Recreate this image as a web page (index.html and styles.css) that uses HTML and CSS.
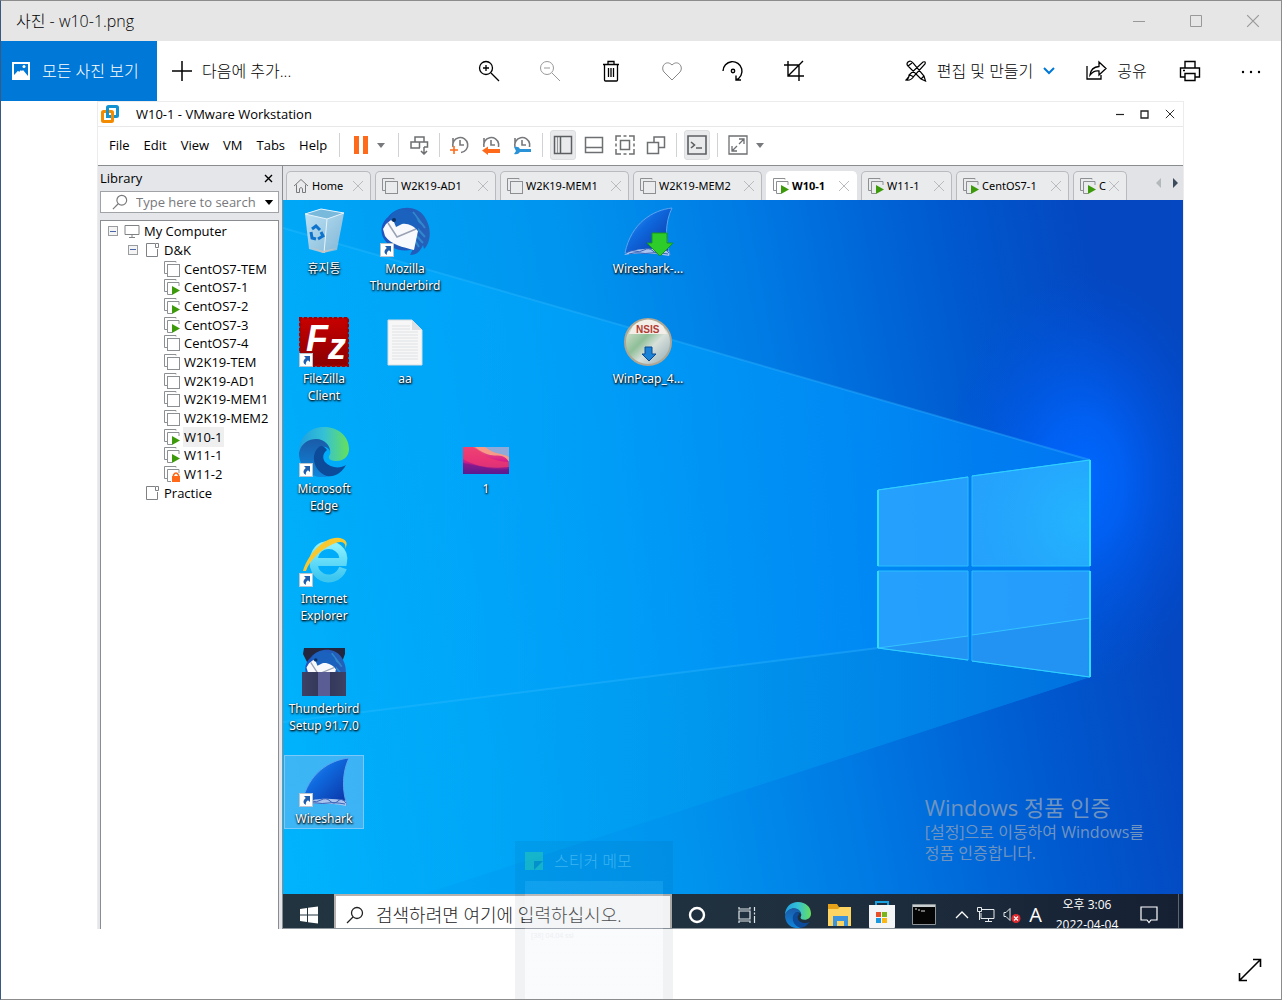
FILE: index.html
```html
<!DOCTYPE html>
<html lang="ko">
<head>
<meta charset="utf-8">
<meta name="viewport" content="width=device-width, initial-scale=1">
<title>사진 - w10-1.png</title>
<link rel="stylesheet" href="styles.css">
</head>
<body>
<svg class="defs" aria-hidden="true">
  <defs>
    <linearGradient id="gFin" x1="0" y1="0" x2="1" y2="1"><stop offset="0" stop-color="#4aa0f5"/><stop offset=".4" stop-color="#0f6adf"/><stop offset="1" stop-color="#0a2fa0"/></linearGradient>
    <linearGradient id="gEdgeTop" x1="0" y1="0" x2="1" y2="0"><stop offset="0" stop-color="#1f9fe0"/><stop offset=".5" stop-color="#35c1d5"/><stop offset="1" stop-color="#66e05a"/></linearGradient>
    <linearGradient id="gEdgeLeft" x1="0" y1="0" x2="0" y2="1"><stop offset="0" stop-color="#1a5ba8"/><stop offset="1" stop-color="#0f86dc"/></linearGradient>
    <linearGradient id="gRed" x1="0" y1="0" x2="0" y2="1"><stop offset="0" stop-color="#c80000"/><stop offset="1" stop-color="#8a0000"/></linearGradient>
    <linearGradient id="gBin" x1="0" y1="0" x2="1" y2="1"><stop offset="0" stop-color="#d4eaf6"/><stop offset="1" stop-color="#8fb8d2"/></linearGradient>
    <linearGradient id="gSwirl" x1="0" y1="0" x2="1" y2="0"><stop offset="0" stop-color="#1c55c0"/><stop offset="1" stop-color="#2560b8"/></linearGradient>
    <linearGradient id="gPic" x1="0" y1="0" x2="0" y2="1"><stop offset="0" stop-color="#f06a78"/><stop offset=".5" stop-color="#d81e88"/><stop offset="1" stop-color="#5a1a90"/></linearGradient>
    <linearGradient id="gIe" x1="0" y1="0" x2="0" y2="1"><stop offset="0" stop-color="#8af0ff"/><stop offset="1" stop-color="#3cc6f0"/></linearGradient>
    <linearGradient id="gBox" x1="0" y1="0" x2="1" y2="0"><stop offset="0" stop-color="#3d4264"/><stop offset=".36" stop-color="#34385a"/><stop offset=".37" stop-color="#5a5d94"/><stop offset=".63" stop-color="#5a5d94"/><stop offset=".64" stop-color="#34385a"/><stop offset="1" stop-color="#3d4264"/></linearGradient>
    <linearGradient id="gDisc" x1="0" y1="0" x2="1" y2="1"><stop offset="0" stop-color="#f2efe6"/><stop offset=".42" stop-color="#8fbf98"/><stop offset=".6" stop-color="#d8e0da"/><stop offset="1" stop-color="#8fa9b5"/></linearGradient>
    <symbol id="shortcut" viewBox="0 0 14 14"><rect x=".5" y=".5" width="13" height="13" fill="#fff" stroke="#b8c4d0"/><path d="M5 3h6v6L9 7.200C7 8.500 6.500 10 7 12C4 10.500 3.500 7.500 6.800 5z" fill="#1f5fae"/></symbol>
    <symbol id="edge" viewBox="0 0 50 50">
      <path d="M0 25C0 10 11 0 25 0C40 0 50 10 50 22C50 30 44 34 38 34C32 34 29 32 30 29C33 26 31 17 24 14C16 10 5 14 0 25z" fill="url(#gEdgeTop)"/>
      <path d="M0 26C2 16 10 12 17 12C26 12 31 19 31 24C29 20 24 18 20 22C12 28 17 45 31 49C14 54 0 42 0 26z" fill="url(#gEdgeLeft)"/>
      <path d="M20 20C11 27 14 44 28 49C36 51 44 44 47 38C41 42 31 41 26 35C23 31 24 26 28 23C25 19 22 18 20 20z" fill="#0c4a9a"/>
    </symbol>
    <symbol id="fin" viewBox="0 0 50 50"><path d="M49 1C30 3 8 16 2 46C18 43 32 44 47 48C42 34 42 15 49 1z" fill="url(#gFin)" stroke="#5aa4f0" stroke-width="1"/><path d="M1 48C10 41 30 40 46 44V49C30 46 15 46 1 48z" fill="#aac4ee"/><path d="M3 46q5-4 9-2t9-1t9 1t8 0t8 2M6 47q6-2 11-1t11 0t17 1" fill="none" stroke="#3a62b8"/></symbol>
    <symbol id="bird" viewBox="0 0 50 50"><path d="M8 10C18-2 36-2 44 9C54 23 49 38 44 42L43 38C40 45 36 48 30 48L33 42C22 46 10 42 4 32C-1 24 2 15 8 10z" fill="url(#gSwirl)"/><path d="M30 6l13 12M33 5l12 16M36 20l9 10M34 26l9 10M34 32l5 8" stroke="#2f88cc" stroke-width="2"/><path d="M6 17L11 13L34 16L38 24L34 43C23 40 11 38 5 29L3 22z" fill="#f7f9fc"/><path d="M8 16L17 30L36 22" fill="none" stroke="#9aa2b4" stroke-width="1.500"/><path d="M9 12C14 0 27-1 36 10C39 15 38 18 38 24C34 19 28 16 22 17L16 20L14 15z" fill="#1a62bd"/><circle cx="14" cy="13" r="2" fill="#0b2e60"/></symbol>
    <symbol id="vm" viewBox="0 0 16 16"><path d="M12 1.500V.5H.5v12H3" fill="none" stroke="#8d9093"/><rect x="3.500" y="3.500" width="12" height="12" fill="none" stroke="#8d9093"/></symbol>
    <symbol id="vmon" viewBox="0 0 16 16"><path d="M12 1.500V.5H.5v12H3M8 15.500H3.500v-12H15V7" fill="none" stroke="#8d9093"/><path d="M8 7l8 4.500L8 16z" fill="#3c9a0b"/></symbol>
    <symbol id="vmlock" viewBox="0 0 16 16"><path d="M12 1.500V.5H.5v12H3M7 15.500H3.500v-12H15V7" fill="none" stroke="#8d9093"/><path d="M9.500 11V9q2.500-4 5 0v2" fill="none" stroke="#ff6a1a" stroke-width="1.500"/><rect x="8" y="10" width="8" height="6" fill="#ff6a1a"/></symbol>
    <symbol id="folder" viewBox="0 0 16 16"><path d="M11 1.500H2.500v13h11V7M11.500 1.500h3v4h-3z" fill="none" stroke="#7f8285"/></symbol>
    <symbol id="cross" viewBox="0 0 12 12"><path d="M1 1l10 10M11 1L1 11" fill="none" stroke="currentColor"/></symbol>
    <symbol id="caret" viewBox="0 0 10 6"><path d="M0 0h10L5 6z" fill="currentColor"/></symbol>
    <symbol id="lens" viewBox="0 0 18 18"><circle cx="11" cy="7" r="5.500" fill="none" stroke="currentColor" stroke-width="1.300"/><path d="M7 11l-6 6" stroke="currentColor" stroke-width="1.300"/></symbol>
    <symbol id="clock" viewBox="0 0 20 20"><path d="M3 12A7.500 7.500 0 1 1 11 17.500M3 3v6M10 5v5h4" fill="none" stroke="#77797c" stroke-width="1.600"/></symbol>
    <symbol id="minus" viewBox="0 0 12 12"><path d="M0 6.500h12" stroke="currentColor"/></symbol>
    <symbol id="square" viewBox="0 0 12 12"><path d="M.5.5h11v11H.5z" fill="none" stroke="currentColor"/></symbol>
  </defs>
</svg>

<div class="viewer">
  <header class="titlebar">
    <h1>사진 - w10-1.png</h1>
    <div class="win-controls">
      <button aria-label="최소화"><svg width="12" height="12"><use href="#minus"/></svg></button>
      <button aria-label="최대화"><svg width="12" height="12"><use href="#square"/></svg></button>
      <button aria-label="닫기"><svg width="14" height="14"><use href="#cross"/></svg></button>
    </div>
  </header>

  <nav class="commands">
    <div class="group">
      <button class="all-photos"><svg width="18" height="18" viewBox="0 0 18 18"><path fill="#fff" d="M0 0h18v18H0z"/><path d="M2 2h14v14h-1L9 8l-2 2-1-1-4 4z" fill="#0078d7"/><path d="M2 14l4-5 6 7H2zM11 8l5 6v2h-2L9 10z" fill="#fff"/><circle cx="12" cy="4.500" r="1.500" fill="#fff"/></svg>모든 사진 보기</button>
      <button class="add-to"><svg width="20" height="20" viewBox="0 0 20 20"><path d="M10 0v20M0 10h20" stroke="#000" stroke-width="1.500"/></svg>다음에 추가...</button>
    </div>
    <div class="group center">
      <button aria-label="확대"><svg width="22" height="22" viewBox="0 0 22 22" fill="none" stroke="#000" stroke-width="1.300"><circle cx="8" cy="8" r="6.500"/><path d="M13 13l8 8M5 8h6M8 5v6"/></svg></button>
      <button aria-label="축소"><svg width="22" height="22" viewBox="0 0 22 22" fill="none" stroke="#999"><circle cx="8" cy="8" r="6.500"/><path d="M13 13l8 8M5 8h6"/></svg></button>
      <button aria-label="삭제"><svg width="22" height="22" viewBox="0 0 22 22" fill="none" stroke="#000" stroke-width="1.300"><path d="M3 4.500h16M4.500 5v15q0 1 1 1h11q1 0 1-1V5M8 4V1.500h6V4M8.500 8v9M11 8v9M13.500 8v9"/></svg></button>
      <button aria-label="즐겨찾기"><svg width="22" height="22" viewBox="0 0 22 22" fill="none" stroke="#888"><path d="M11 20L3 12C-1 7 5-1 11 5C17-1 23 7 19 12z"/></svg></button>
      <button aria-label="회전"><svg width="22" height="22" viewBox="0 0 22 22" fill="none" stroke="#000" stroke-width="1.400"><path d="M1 11A9.500 9.500 0 1 1 14 20M14 15.500V20h5"/><circle cx="11" cy="11" r="1.700"/></svg></button>
      <button aria-label="자르기"><svg width="22" height="22" viewBox="0 0 22 22" fill="none" stroke="#000" stroke-width="1.400"><path d="M5 1v15h16M1 5h15v16M20 1L5 16"/></svg></button>
    </div>
    <div class="group right">
      <button class="edit"><svg width="22" height="22" viewBox="0 0 22 22" fill="none" stroke="#000" stroke-width="1.200"><path d="M3 2q3-2 5 1l11 13 1.500 5-4.500-2L3 6q-2-2 0-4zM3 6l4-3M16 19l3-3M18 2q3-1 2 2L9 16q-3 5-8 4 3-1 3-5zM5 15l4 2M1 20l4-5"/></svg>편집 및 만들기<svg class="chevron" width="12" height="8" viewBox="0 0 12 8"><path d="M1 1l5 5 5-5" fill="none" stroke="#0078d7" stroke-width="2"/></svg></button>
      <button class="share"><svg width="22" height="22" viewBox="0 0 22 22" fill="none" stroke="#000" stroke-width="1.300"><path d="M2 6v13h14v-4M5 15q1-8 9-8.500V2l7 6.500-7 6.500v-4q-5-1-9 4z"/></svg>공유</button>
      <button aria-label="인쇄"><svg width="22" height="22" viewBox="0 0 22 22" fill="none" stroke="#000" stroke-width="1.400"><path d="M6 8V1.500h10V8M6 17H1.500V8h19v9H16M6 13.500h10v7H6zM4 10.500h2"/></svg></button>
      <button aria-label="더 보기"><svg width="22" height="22" viewBox="0 0 22 22"><circle cx="3" cy="12" r="1.200"/><circle cx="11" cy="12" r="1.200"/><circle cx="19" cy="12" r="1.200"/></svg></button>
    </div>
  </nav>

  <main class="stage">
    <section class="vmware">
      <header class="vm-title">
        <svg width="18" height="18" viewBox="0 0 18 18" fill="none" stroke-width="3"><rect x="6.500" y="1.500" width="10" height="10" rx="1" stroke="#1292d0"/><rect x="1.500" y="6.500" width="10" height="10" rx="1" stroke="#f38b00"/><path d="M6.500 5v6.500H10" stroke="#1292d0"/></svg>
        <h2>W10-1 - VMware Workstation</h2>
        <div class="vm-controls">
          <button aria-label="Minimize"><svg width="8" height="10" viewBox="0 0 8 10"><path d="M0 5.500h8" stroke="#222" stroke-width="1.200"/></svg></button>
          <button aria-label="Maximize"><svg width="9" height="9" viewBox="0 0 9 9"><path d="M1 1h7v7H1z" fill="none" stroke="#222" stroke-width="1.300"/></svg></button>
          <button aria-label="Close"><svg width="10" height="10"><use href="#cross"/></svg></button>
        </div>
      </header>

      <div class="vm-menu">
        <nav class="menus"><button>File</button><button>Edit</button><button>View</button><button>VM</button><button>Tabs</button><button>Help</button></nav>
        <div class="tools">
          <i class="sep"></i>
          <button class="pause" aria-label="Suspend"><svg width="16" height="18" viewBox="0 0 16 18"><path d="M1 0h5v18H1zM10 0h5v18h-5z" fill="#ff6a1a"/></svg><svg class="gray" width="8" height="5"><use href="#caret"/></svg></button>
          <i class="sep"></i>
          <button aria-label="Send Ctrl+Alt+Del"><svg width="20" height="20" viewBox="0 0 20 20" fill="none" stroke="#6d6f72" stroke-width="1.500"><path d="M6 7V2h9v5M10.500 7v6M11 13H2V7h16.500v5H15M15 12v7M12 16l3 3 3-3"/></svg></button>
          <i class="sep"></i>
          <button aria-label="Take snapshot"><svg width="20" height="20" viewBox="0 0 20 20"><use href="#clock"/><path d="M4 11v8M0 15h8" stroke="#ff6a1a" stroke-width="1.600"/></svg></button>
          <button aria-label="Revert snapshot"><svg width="20" height="20" viewBox="0 0 20 20"><use href="#clock"/><path d="M1 12h19v8H1z" fill="#fff"/><path d="M1 15.500l6-4v2.500h12v4H7v2z" fill="#ff6a1a"/></svg></button>
          <button aria-label="Manage snapshots"><svg width="20" height="20" viewBox="0 0 20 20"><use href="#clock"/><path d="M1 12h19v8H1z" fill="#fff"/><path d="M2 12q5-1 6 2h11v3H8q-2 3-6 2l2-3z" fill="#2a93d8"/></svg></button>
          <i class="sep"></i>
          <button class="on" aria-label="Show library"><svg width="20" height="20" viewBox="0 0 20 20" fill="none" stroke="#5c5f62" stroke-width="1.500"><path d="M1.500 1.500h17v17h-17zM7.500 2v16"/><path d="M4.500 2v16" stroke-width=".6"/></svg></button>
          <button aria-label="Show thumbnails"><svg width="20" height="20" viewBox="0 0 20 20" fill="none" stroke="#6d6f72" stroke-width="1.500"><path d="M1.500 2.500h17v15h-17zM2 12.500h16"/></svg></button>
          <button aria-label="Full screen"><svg width="20" height="20" viewBox="0 0 20 20" fill="none" stroke="#6d6f72" stroke-width="1.500"><path d="M1 6V1h5M14 1h5v5M19 14v5h-5M6 19H1v-5M8.500 1h3M8.500 19h3M1 8.500v3M19 8.500v3M5.500 5.500h9v9h-9z"/></svg></button>
          <button aria-label="Unity"><svg width="20" height="20" viewBox="0 0 20 20" fill="none" stroke="#6d6f72" stroke-width="1.500"><path d="M1.500 7.500h11v11h-11zM8 7V2h10.500v10.500H13"/></svg></button>
          <i class="sep"></i>
          <button class="on" aria-label="Console view"><svg width="20" height="20" viewBox="0 0 20 20" fill="none" stroke="#5c5f62" stroke-width="1.600"><path d="M1 1h18v18H1zM4 7l3.500 3L4 13M9 13h6"/></svg></button>
          <i class="sep"></i>
          <button aria-label="Fit guest"><svg width="20" height="20" viewBox="0 0 20 20" fill="none" stroke="#6d6f72" stroke-width="1.300"><path d="M1 1h18v18H1zM11 4h5v5M16 4l-5 5M9 16H4v-5M4 16l5-5"/></svg></button>
          <svg class="gray" width="8" height="5"><use href="#caret"/></svg>
        </div>
      </div>

      <div class="vm-body">
        <aside class="library">
          <div class="lib-head"><h3>Library</h3><button aria-label="Close library"><svg width="9" height="9" viewBox="0 0 9 9"><path d="M1 1l7 7M8 1L1 8" stroke="#000" stroke-width="1.400"/></svg></button></div>
          <label class="lib-search"><svg width="16" height="16"><use href="#lens"/></svg><input type="text" placeholder="Type here to search" aria-label="Search library"><svg class="black" width="10" height="5"><use href="#caret"/></svg></label>
          <ul class="tree">
            <li class="l0"><i class="minus"></i><svg width="16" height="16" viewBox="0 0 16 16"><path d="M1 2.500h14v9H1zM5 14.500h6M8 12v2" fill="none" stroke="#7f8285"/></svg>My Computer</li>
            <li class="l1"><i class="minus"></i><svg width="16" height="16"><use href="#folder"/></svg>D&amp;K</li>
            <li class="l2"><svg width="16" height="16"><use href="#vm"/></svg>CentOS7-TEM</li>
            <li class="l2"><svg width="16" height="16"><use href="#vmon"/></svg>CentOS7-1</li>
            <li class="l2"><svg width="16" height="16"><use href="#vmon"/></svg>CentOS7-2</li>
            <li class="l2"><svg width="16" height="16"><use href="#vmon"/></svg>CentOS7-3</li>
            <li class="l2"><svg width="16" height="16"><use href="#vm"/></svg>CentOS7-4</li>
            <li class="l2"><svg width="16" height="16"><use href="#vm"/></svg>W2K19-TEM</li>
            <li class="l2"><svg width="16" height="16"><use href="#vm"/></svg>W2K19-AD1</li>
            <li class="l2"><svg width="16" height="16"><use href="#vm"/></svg>W2K19-MEM1</li>
            <li class="l2"><svg width="16" height="16"><use href="#vm"/></svg>W2K19-MEM2</li>
            <li class="l2"><svg width="16" height="16"><use href="#vmon"/></svg><span class="current">W10-1</span></li>
            <li class="l2"><svg width="16" height="16"><use href="#vmon"/></svg>W11-1</li>
            <li class="l2"><svg width="16" height="16"><use href="#vmlock"/></svg>W11-2</li>
            <li class="l1b"><svg width="16" height="16"><use href="#folder"/></svg>Practice</li>
          </ul>
        </aside>

        <div class="guest">
          <div class="tabs">
            <button class="tab t-home"><svg width="16" height="16" viewBox="0 0 16 16"><path d="M1 8l7-6.500L15 8M3.500 6.500v8h3v-4q1.500-2 3 0v4h3v-8" fill="none" stroke="#77797c"/></svg><span>Home</span><svg class="x" width="12" height="12"><use href="#cross"/></svg></button>
            <button class="tab t-ad"><svg width="16" height="16"><use href="#vm"/></svg><span>W2K19-AD1</span><svg class="x" width="12" height="12"><use href="#cross"/></svg></button>
            <button class="tab t-mem"><svg width="16" height="16"><use href="#vm"/></svg><span>W2K19-MEM1</span><svg class="x" width="12" height="12"><use href="#cross"/></svg></button>
            <button class="tab t-mem"><svg width="16" height="16"><use href="#vm"/></svg><span>W2K19-MEM2</span><svg class="x" width="12" height="12"><use href="#cross"/></svg></button>
            <button class="tab t-w active"><svg width="16" height="16"><use href="#vmon"/></svg><span>W10-1</span><svg class="x" width="12" height="12"><use href="#cross"/></svg></button>
            <button class="tab t-w"><svg width="16" height="16"><use href="#vmon"/></svg><span>W11-1</span><svg class="x" width="12" height="12"><use href="#cross"/></svg></button>
            <button class="tab t-cent"><svg width="16" height="16"><use href="#vmon"/></svg><span>CentOS7-1</span><svg class="x" width="12" height="12"><use href="#cross"/></svg></button>
            <button class="tab t-c"><svg width="16" height="16"><use href="#vmon"/></svg><span>C</span><svg class="x" width="12" height="12"><use href="#cross"/></svg></button>
            <div class="tab-scroll"><button aria-label="Scroll left"><svg width="5" height="10" viewBox="0 0 5 10"><path d="M5 0v10L0 5z" fill="#b4b8bc"/></svg></button><button aria-label="Scroll right"><svg width="5" height="10" viewBox="0 0 5 10"><path d="M0 0v10l5-5z" fill="#3d4c5c"/></svg></button></div>
          </div>

          <div class="desktop">
            <svg class="wallpaper" viewBox="0 0 900 694" preserveAspectRatio="none" aria-hidden="true">
              <defs>
                <linearGradient id="wBase" gradientUnits="userSpaceOnUse" x1="-60" y1="480" x2="860" y2="306"><stop offset="0" stop-color="#00b6fc"/><stop offset=".2" stop-color="#00a4f6"/><stop offset=".45" stop-color="#0094ee"/><stop offset=".64" stop-color="#007ae4"/><stop offset=".84" stop-color="#005ad0"/><stop offset="1" stop-color="#0447c0"/></linearGradient>
                <linearGradient id="wWedge" gradientUnits="userSpaceOnUse" x1="0" y1="0" x2="807" y2="0"><stop offset="0" stop-color="#00b4ff" stop-opacity=".2"/><stop offset=".2" stop-color="#00aeff" stop-opacity=".5"/><stop offset=".5" stop-color="#009cfa" stop-opacity=".7"/><stop offset=".75" stop-color="#008cf8" stop-opacity=".85"/><stop offset="1" stop-color="#0078f0" stop-opacity=".9"/></linearGradient>
                <linearGradient id="wLow" gradientUnits="userSpaceOnUse" x1="0" y1="0" x2="807" y2="0"><stop offset="0" stop-color="#00b4f8" stop-opacity="0"/><stop offset=".5" stop-color="#0098e4" stop-opacity=".4"/><stop offset="1" stop-color="#0070dc" stop-opacity=".8"/></linearGradient>
                <linearGradient id="wRay" gradientUnits="userSpaceOnUse" x1="0" y1="0" x2="807" y2="0"><stop offset="0" stop-color="#38c0ff" stop-opacity=".3"/><stop offset="1" stop-color="#30b0ff" stop-opacity=".4"/></linearGradient>
                <radialGradient id="wGlow"><stop offset="0" stop-color="#0068ff"/><stop offset=".3" stop-color="#0064fc" stop-opacity=".8"/><stop offset="1" stop-color="#0050e0" stop-opacity="0"/></radialGradient>
                <radialGradient id="wShine" gradientUnits="userSpaceOnUse" cx="800" cy="320" r="150"><stop offset="0" stop-color="#22c4ff" stop-opacity=".6"/><stop offset="1" stop-color="#22b0ff" stop-opacity="0"/></radialGradient>
              </defs>
              <rect width="900" height="694" fill="url(#wBase)"/>
              <ellipse cx="800" cy="280" rx="140" ry="210" fill="url(#wGlow)"/>
              <path d="M0 28L807 260V477L400 610L140 694H0z" fill="url(#wWedge)"/>
              <path d="M0 522L595 448L807 477L400 610L140 694H0z" fill="url(#wLow)"/>
              <path d="M0 28L807 260M0 522L595 448" stroke="url(#wRay)" stroke-width="2" fill="none"/>
              <path d="M595 290L685 277V366H595zM689 276L807 260V366H689zM595 371H685V460L595 448zM689 371H807V477L689 461z" fill="#2ea6ff" fill-opacity=".8" stroke="#28bfff"/>
              <path d="M689 276L807 260V366H689z" fill="url(#wShine)"/>
              <path d="M595 448L685 436V460zM689 435L807 418V477L689 461z" fill="#1f88ea" fill-opacity=".5"/>
              <path d="M595 448L685 436M689 435L807 418" stroke="#34c4ff" fill="none"/>
              <path d="M595 290V366M595 371V448M807 477V371M807 366V260" fill="none" stroke="#30dcff" stroke-width="2"/>
              <path d="M595 290L685 277M689 276L807 260M595 448L685 460M689 461L807 477" stroke="#30d0ff"/>
            </svg>

            <div class="icons">
              <a href="#" class="item c1 r1"><svg width="50" height="50" viewBox="0 0 50 50"><path d="M6 7L22 2L45 6L38 43L24 46L10 42z" fill="url(#gBin)" opacity=".9"/><path d="M6 7L22 2L45 6L28 12z" fill="#79b9dc" stroke="#e3f4fc"/><path d="M28 12L25 46" stroke="#e8f4fa"/><path d="M11 40L24 44L38 41L24 46z" fill="#c8c4c0"/><path d="M13 22l4-3 4 4M12 25l1 6 4 1M19 32l5-3-2-4" fill="none" stroke="#0c74cc" stroke-width="3"/></svg><span>휴지통</span></a>
              <a href="#" class="item c1 r2"><svg width="50" height="50" viewBox="0 0 50 50"><rect x="1" y="1" width="48" height="48" fill="url(#gRed)"/><rect x="1" y="1" width="48" height="48" fill="none" stroke="#a80000" stroke-width="3" stroke-linecap="round" stroke-dasharray="1 4"/><text x="7" y="34" class="fz">F<tspan dy="8">z</tspan></text><use href="#shortcut" x="0" y="36" width="14" height="14"/></svg><span>FileZilla Client</span></a>
              <a href="#" class="item c1 r3"><svg width="50" height="50"><use href="#edge" width="50" height="50"/><use href="#shortcut" x="0" y="36" width="14" height="14"/></svg><span>Microsoft Edge</span></a>
              <a href="#" class="item c1 r4"><svg width="50" height="50" viewBox="0 0 50 50"><path d="M44 31C40 42 29 43 23 40C11 34 12 14 24 9C36 5 46 14 44 25H17" fill="none" stroke="url(#gIe)" stroke-width="8"/><path d="M4 34C10 14 30-4 44 2C49 4 48 9 46 12C48 5 42 3 34 7C22 12 10 24 7 34z" fill="#f8c830"/><use href="#shortcut" x="0" y="36" width="14" height="14"/></svg><span>Internet Explorer</span></a>
              <a href="#" class="item c1 r5"><svg width="50" height="50" viewBox="0 0 50 50"><path d="M5 1h41v6l-3 8H8L4 7z" fill="#23263f"/><use href="#bird" x="5" y="2" width="42" height="42"/><path d="M3 25h44v24H3z" fill="#34385a"/><path d="M3 25h44v24H3z" fill="url(#gBox)"/></svg><span>Thunderbird Setup 91.7.0</span></a>
              <a href="#" class="item c1 r6 selected"><svg width="50" height="50"><use href="#fin" x="1" width="50" height="50"/><use href="#shortcut" x="0" y="36" width="14" height="14"/></svg><span>Wireshark</span></a>
              <a href="#" class="item c2 r1"><svg width="50" height="50"><use href="#bird" width="50" height="50"/><use href="#shortcut" x="0" y="36" width="14" height="14"/></svg><span>Mozilla Thunderbird</span></a>
              <a href="#" class="item c2 r2"><svg width="50" height="50" viewBox="0 0 50 50"><path d="M8 3h24l10 10v35H8z" fill="#f7f7f7" stroke="#d8dce0"/><path d="M32 3v10h10z" fill="#dcdfe3"/><path d="M12 9h18M12 12h18M12 15h26M12 18h26M12 21h26M12 24h26M12 27h26M12 30h26M12 33h26M12 36h26M12 39h26M12 42h26" stroke="#dfe1e3"/></svg><span>aa</span></a>
              <a href="#" class="item c3 r3"><svg width="50" height="50" viewBox="0 0 50 50"><rect x="2" y="20" width="46" height="27" fill="url(#gPic)"/><path d="M18 20h30v15C40 22 34 36 14 20z" fill="#f79a88"/><path d="M24 20h24v10C42 26 34 28 24 20z" fill="#8fa9d8"/><path d="M2 20h10C22 26 28 34 48 35V40C30 42 16 40 2 32z" fill="#ee3a70" opacity=".8"/><path d="M2 36C16 38 30 44 48 42V47H2z" fill="#5a1a90" opacity=".5"/></svg><span>1</span></a>
              <a href="#" class="item c5 r1"><svg width="50" height="50" viewBox="0 0 50 50"><use href="#fin" width="50" height="50"/><path d="M29 26h15v10h6L37 49L24 36h5z" fill="#2ecc2a" stroke="#16951c"/></svg><span>Wireshark-...</span></a>
              <a href="#" class="item c5 r2"><svg width="50" height="50" viewBox="0 0 50 50"><circle cx="25" cy="25" r="23" fill="url(#gDisc)" stroke="#b0a694" stroke-width="2"/><path d="M6 17h38L40 9Q25-4 10 9z" fill="#f4eee8"/><text x="13" y="16" class="nsis">NSIS</text><path d="M22 30h7v7h4l-7 7-7-7h3z" fill="#1a83d8" stroke="#0b4a90"/></svg><span>WinPcap_4...</span></a>
            </div>

            <div class="watermark"><strong>Windows 정품 인증</strong><p>[설정]으로 이동하여 Windows를<br>정품 인증합니다.</p></div>
          </div>

          <footer class="taskbar">
            <div class="taskbar-inner">
              <button class="start" aria-label="시작"><svg width="18" height="18" viewBox="0 0 18 18"><path d="M0 3l7-1v6.500H0zM8 1.800L18 .5v8H8zM0 9.500h7V16l-7-1zM8 9.500h10v8L8 16.200z" fill="#fff"/></svg></button>
              <label class="find"><svg width="18" height="18"><use href="#lens"/></svg><input type="text" placeholder="검색하려면 여기에 입력하십시오." aria-label="검색"></label>
              <button class="wide" aria-label="Cortana"><svg width="18" height="18" viewBox="0 0 18 18"><circle cx="9" cy="9" r="7" fill="none" stroke="#fff" stroke-width="2.400"/></svg></button>
              <button class="wide" aria-label="작업 보기"><svg width="20" height="18" viewBox="0 0 20 18" fill="none" stroke="#dfe5e8" stroke-width="1.200"><path d="M2 5h11v8H2zM2 1v2h11V1M2 17v-2h11v2M17.500 1v4M17.500 10v7M17.500 6.500v2"/></svg></button>
              <div class="pins">
                <button aria-label="Edge"><svg width="26" height="26"><use href="#edge" width="26" height="26"/></svg></button>
                <button aria-label="파일 탐색기"><svg width="26" height="24" viewBox="0 0 26 24"><path d="M1 1h9l2 3h11v19H1z" fill="#e5a117"/><path d="M1 6h10l2-2h11v19H1z" fill="#fcd462"/><path d="M6 13h15v10h-4v-5h-7v5H6z" fill="#3a93dc"/></svg></button>
                <button aria-label="Store"><svg width="26" height="30" viewBox="0 0 26 30"><path d="M7 7V2h12v5" fill="none" stroke="#18a0e0" stroke-width="2"/><path d="M0 5h26v21q0 4-4 4H4q-4 0-4-4z" fill="#f4f5f6"/><path d="M7 12h5v5H7z" fill="#e8502a"/><path d="M13 12h5v5h-5z" fill="#7bb51c"/><path d="M7 18h5v5H7z" fill="#1a98e0"/><path d="M13 18h5v5h-5z" fill="#fbb614"/></svg></button>
                <button aria-label="명령 프롬프트"><svg width="24" height="22" viewBox="0 0 24 22"><path d="M.5.5h23v20H.5z" fill="#050505" stroke="#8c9499"/><path d="M1 2h22" stroke="#c9ced1" stroke-width="2"/><path d="M3 5h2M6 6h2M9 7h4" stroke="#ddd"/></svg></button>
              </div>
              <div class="tray">
                <svg width="14" height="10" viewBox="0 0 14 10"><path d="M1 8l6-6 6 6" fill="none" stroke="#fff" stroke-width="1.300"/></svg>
                <svg width="18" height="16" viewBox="0 0 18 16" fill="none" stroke="#e6eaec"><path d="M5 2.500h12v9H4V6M8 14.500h7M11.500 12v2M.5.500h4v4h-4zM2.500 5v8"/></svg>
                <svg width="18" height="18" viewBox="0 0 18 18"><path d="M1 6.500h2l4-4v12l-4-4H1z" fill="none" stroke="#e6eaec"/><circle cx="13" cy="12.500" r="4.500" fill="#e02a2f"/><path d="M11 10.500l4 4M15 10.500l-4 4" stroke="#fff" stroke-width="1.200"/></svg>
                <span class="ime">A</span>
              </div>
              <time class="clock" datetime="2022-04-04T15:06"><span>오후 3:06</span><span>2022-04-04</span></time>
              <button class="notes" aria-label="알림"><svg width="18" height="18" viewBox="0 0 18 18"><path d="M1 1h16v13h-6l-2 2.500L7 14H1z" fill="none" stroke="#fff" stroke-width="1.200"/></svg></button>
              <i class="show-desktop"></i>
            </div>
          </footer>
        </div>
      </div>
    </section>
    <button class="fullscreen" aria-label="전체 화면"><svg width="24" height="24" viewBox="0 0 24 24" fill="none" stroke="#000" stroke-width="1.600"><path d="M2 22L22 2M15 1.500h7.500V9M1.500 15v7.500H9"/></svg></button>
  </main>

  <div class="ghost">
    <div class="ghost-head"><svg width="18" height="18" viewBox="0 0 18 18"><path d="M0 0h18v18H0z" fill="#1fc0c0"/><path d="M9 18V9h9z" fill="#0590c0"/></svg>스티커 메모</div>
    <div class="ghost-page">[38] 04.04 ssl</div>
  </div>
</div>
</body>
</html>
```
FILE: styles.css
```css
* { box-sizing: border-box; }

body {
  margin: 0;
  background: #fff;
  color: #000;
  font: 13px/18px "Open Sans", "Noto Sans CJK KR", sans-serif;
}

h1, h2, h3, p, ul { margin: 0; padding: 0; font-size: inherit; font-weight: 400; }
button { margin: 0; padding: 0; border: 0; background: none; color: inherit; font: inherit; }
input { min-width: 0; border: 0; padding: 0; background: none; font: inherit; outline: 0; }
svg { display: block; flex: none; }
.defs { position: absolute; width: 0; height: 0; }

.viewer {
  position: relative;
  display: flex;
  flex-direction: column;
  min-height: 100vh;
  overflow: hidden;
  border: 1px solid #8c8c8c;
  border-left-color: #3a5884;
}

/* photo viewer chrome */
.titlebar {
  display: flex;
  align-items: center;
  justify-content: space-between;
  height: 40px;
  padding-left: 15px;
  background: #e6e6e6;
  font-size: 16px;
}
.titlebar h1 { font-weight: 300; }
.win-controls { display: flex; color: #999; }
.win-controls button { display: grid; place-items: center; width: 57px; height: 40px; }

.commands {
  display: grid;
  grid-template-columns: 1fr auto 1fr;
  height: 60px;
  font-size: 16px;
  font-weight: 300;
}
.group { display: flex; align-items: stretch; white-space: nowrap; }
.group button { display: flex; align-items: center; justify-content: center; }
.center button { width: 61px; }
.right { justify-content: flex-end; }
.right button { width: 61px; }
.group .all-photos { justify-content: flex-start; width: 156px; gap: 12px; padding-left: 11px; background: #0078d7; color: #fff; }
.add-to { gap: 10px; padding-left: 15px; }
.right .edit { width: 186px; gap: 10px; }
.right .share { width: 86px; gap: 10px; }

.stage {
  flex: 1;
  display: flex;
  flex-direction: column;
  align-items: stretch;
  padding: 0 97px 0 96px;
}
.fullscreen { align-self: flex-end; margin: 29px -78px 17px 0; }

/* VMware window */
.vmware {
  flex: 1;
  display: flex;
  flex-direction: column;
  border: 1px solid #ececec;
  border-width: 1px 1px 0;
}
.vm-title { display: flex; align-items: center; height: 25px; padding-left: 3px; border-bottom: 1px solid #e8e8e8; }
.vm-title h2 { margin-left: 17px; }
.vm-controls { display: flex; gap: 16px; align-items: center; margin-left: auto; padding-right: 8px; }

.vm-menu { display: flex; align-items: center; height: 38px; padding: 0 0 2px 11px; }
.menus { display: flex; gap: 14px; }
.tools { display: flex; align-items: center; gap: 5px; margin-left: 10px; }
.tools button { display: grid; place-items: center; width: 26px; height: 30px; border-radius: 3px; }
.tools .on { background: #e9eaec; border: 1px solid #dcdee0; }
.tools .pause { display: flex; gap: 8px; width: 32px; margin: 0 6px; }
.sep { width: 1px; height: 24px; margin: 0 2px; background: #d0d2d4; }
.gray { color: #77797c; }
.black { color: #000; }

.vm-body { flex: 1; display: grid; grid-template-columns: 185px minmax(0, 1fr); border-top: 1px solid #8a8d90; }

.library { display: flex; flex-direction: column; padding: 2px 3px 0 2px; background: #e4e6e9; border-right: 1px solid #8a8d90; }
.lib-head { display: flex; align-items: center; justify-content: space-between; height: 20px; padding-right: 6px; }
.lib-search { display: flex; align-items: center; gap: 8px; height: 22px; margin-top: 3px; padding: 0 4px 0 11px; background: #fff; border: 1px solid #a0a3a6; color: #77797c; }
.lib-search input { flex: 1; }
.lib-search input::placeholder { color: #77797c; opacity: 1; }
.tree {
  flex: 1;
  display: grid;
  grid-template-rows: repeat(15, minmax(0, 18fr)) minmax(0, 412fr);
  margin-top: 7px;
  padding-top: 1px;
  background: #fff;
  border: 1px solid #8a8d90;
  border-bottom: 0;
  list-style: none;
}
.tree li { display: flex; align-items: center; gap: 4px; white-space: nowrap; }
.tree .l0 { padding-left: 7px; }
.tree .l1 { padding-left: 27px; }
.tree .l1b { padding-left: 43px; }
.tree .l2 { padding-left: 63px; }
.minus { width: 10px; height: 10px; border: 1px solid #9a9da0; background: linear-gradient(#4a66a8, #4a66a8) center / 6px 1px no-repeat #f4f4f4; margin-right: 2px; }
.current { background: #efefef; box-shadow: 0 0 0 1px #efefef; }

/* tabs */
.guest { display: flex; flex-direction: column; min-width: 0; }
.tabs { display: flex; align-items: flex-end; gap: 4px; height: 34px; padding-left: 3px; background: #e1e3e6; overflow: hidden; font-family: "Noto Sans", sans-serif; font-size: 11px; }
.tab { display: flex; align-items: center; height: 29px; padding: 0 6px; background: #eaebed; border: 1px solid #b8babd; border-bottom: 0; border-radius: 5px 5px 0 0; }
.tab span { margin-left: 3px; white-space: nowrap; }
.tab .x { margin-left: auto; color: #b9bbbe; }
.tab.active { background: #fff; border-color: #fff; font-weight: 700; }
.t-home { width: 85px; }
.t-ad { width: 121px; }
.t-mem { width: 129px; }
.t-w { width: 91px; }
.t-cent { width: 113px; }
.t-c { width: 54px; }
.tab-scroll { display: flex; gap: 12px; height: 34px; align-items: center; margin-left: auto; padding-right: 5px; }

/* guest desktop */
.desktop { position: relative; flex: 1; overflow: hidden; background: #0090f0; }
.wallpaper { position: absolute; inset: 0; width: 100%; height: 100%; }
.icons { position: relative; display: grid; grid-template-columns: repeat(5, 81px); grid-template-rows: repeat(6, 110px); padding: 5px 0 0 1px; }
.item {
  display: flex;
  flex-direction: column;
  align-items: center;
  align-self: start;
  width: 80px;
  padding: 1px 2px;
  color: #fff;
  font: 12px/17px "Noto Sans", "Noto Sans CJK KR", sans-serif;
  text-align: center;
  text-decoration: none;
  text-shadow: 0 1px 2px #000, 1px 1px 2px rgba(0, 0, 0, .8);
  border: 1px solid transparent;
}
.item svg { margin-bottom: 3px; }
.selected { background: rgba(120, 185, 240, .5); border-color: rgba(150, 210, 250, .7); }
.c1 { grid-column: 1; } .c2 { grid-column: 2; } .c3 { grid-column: 3; } .c5 { grid-column: 5; }
.r1 { grid-row: 1; } .r2 { grid-row: 2; } .r3 { grid-row: 3; } .r4 { grid-row: 4; } .r5 { grid-row: 5; } .r6 { grid-row: 6; }
.fz { font: italic 700 36px "Liberation Sans", sans-serif; fill: #fff; text-shadow: none; }
.nsis { font: 700 10px "Liberation Sans", sans-serif; fill: #b23a34; text-shadow: none; }

.watermark { position: absolute; right: 39px; bottom: 30px; color: #7094c0; font-size: 16px; line-height: 21px; font-weight: 300; }
.watermark strong { display: block; font-size: 22px; line-height: 30px; font-weight: 400; }

/* guest taskbar */
.taskbar { height: 35px; overflow: hidden; background: linear-gradient(90deg, #21343f, #1f2f3e 60%, #152033); color: #fff; border-bottom: 1px solid #8d949c; }
.taskbar-inner { display: flex; align-items: center; height: 41px; }
.taskbar button { display: grid; place-items: center; height: 41px; }
.start { width: 51px; }
.find { display: flex; align-items: center; gap: 12px; width: 338px; height: 41px; padding-left: 10px; background: #fff; border: 2px solid #b5b1ae; color: #222; }
.find input { flex: 1; font-size: 18px; font-weight: 300; }
.find input::placeholder { color: #222; opacity: 1; }
.wide { width: 50px; }
.pins { display: flex; margin-left: 5px; }
.pins button { width: 42px; }
.tray { display: flex; align-items: center; gap: 8px; margin-left: auto; }
.ime { font-size: 20px; line-height: 24px; }
.clock { display: flex; flex-direction: column; align-items: center; width: 86px; margin-left: 2px; font-size: 12px; line-height: 20px; }
.notes { width: 38px; }
.show-desktop { width: 5px; height: 41px; margin-left: 10px; border-left: 1px solid #5a6672; }

/* fading preview that floats over the photo */
.ghost { position: absolute; left: 514px; bottom: 0; width: 158px; height: 158px; padding: 0 10px; background: rgba(0, 30, 60, .06); color: rgba(120, 215, 255, .5); font-size: 16px; pointer-events: none; }
.ghost-head { display: flex; align-items: center; gap: 11px; height: 40px; font-weight: 300; }
.ghost-head svg { opacity: .7; }
.ghost-page { height: 118px; padding: 46px 6px 0; background: linear-gradient(rgba(60, 190, 255, .25) 0 13px, rgba(255, 255, 255, .2) 13px 48px, rgba(252, 253, 255, .8) 48px); color: #eceff2; font-size: 7px; }
```
